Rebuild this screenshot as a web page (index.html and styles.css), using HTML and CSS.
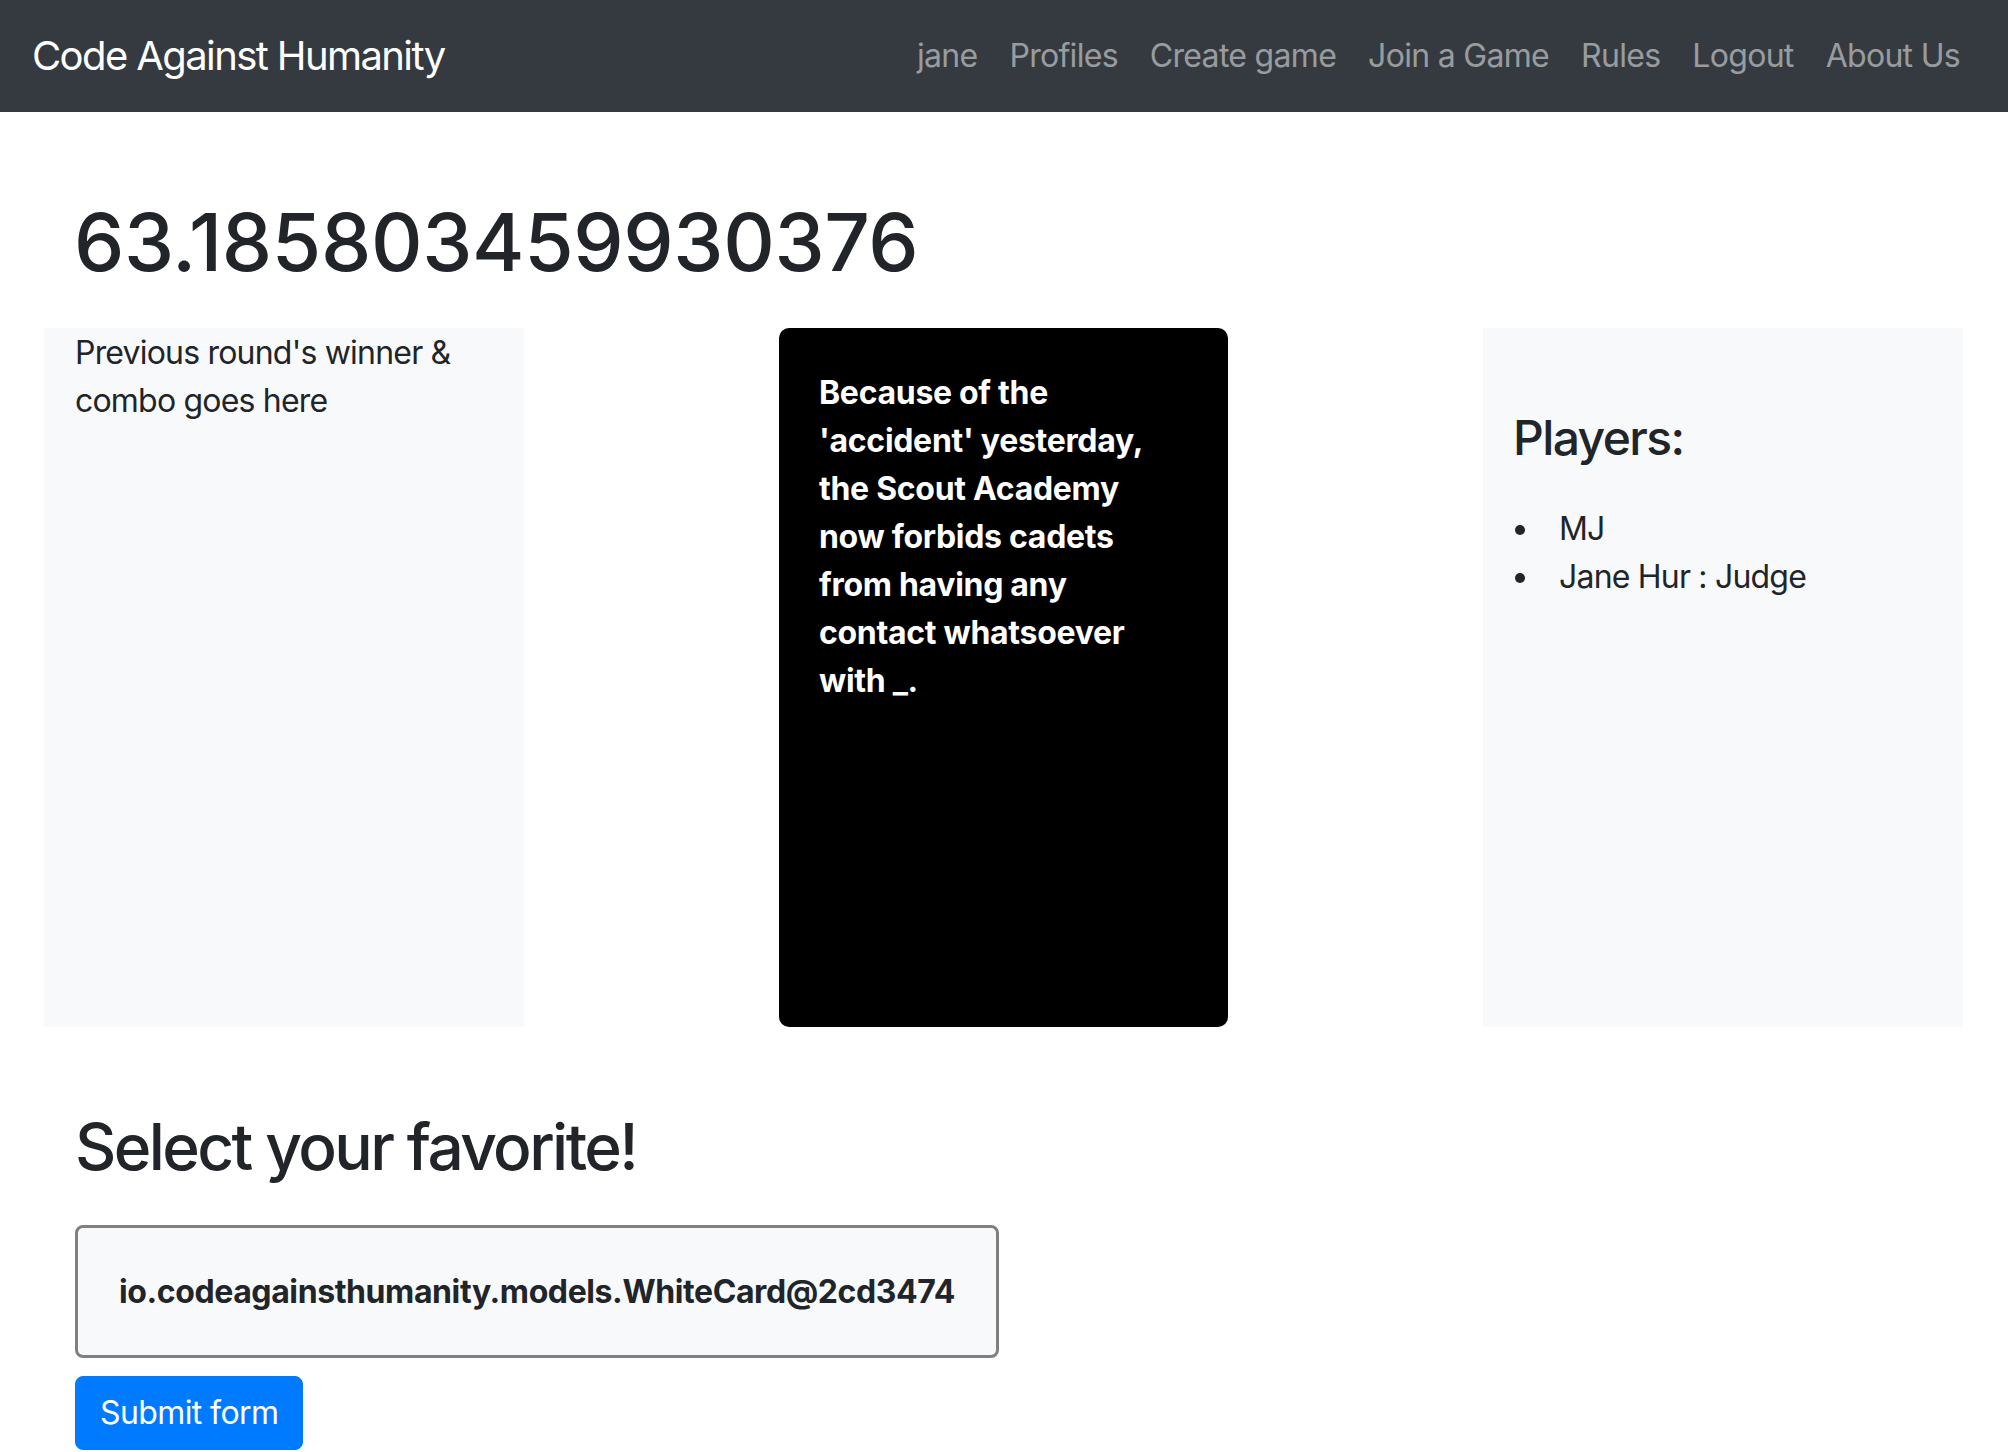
FILE: index.html
```html
<!DOCTYPE html>
<html lang="en">
<head>
<meta charset="utf-8">
<title>Code Against Humanity</title>
<link rel="stylesheet" href="styles.css">
</head>
<body>
<nav class="navbar">
  <a class="brand" href="#">Code Against Humanity</a>
  <ul class="nav-links">
    <li><a href="#">jane</a></li>
    <li><a href="#">Profiles</a></li>
    <li><a href="#">Create game</a></li>
    <li><a href="#">Join a Game</a></li>
    <li><a href="#">Rules</a></li>
    <li><a href="#">Logout</a></li>
    <li><a href="#">About Us</a></li>
  </ul>
</nav>
<main class="page">
  <h1 class="score">63.185803459930376</h1>
  <div class="board">
    <section class="panel winner">
      <p>Previous round's winner &amp; combo goes here</p>
    </section>
    <section class="black-card">
      <p>Because of the 'accident' yesterday, the Scout Academy now forbids cadets from having any contact whatsoever with _.</p>
    </section>
    <section class="panel players">
      <h4 class="players-title">Players:</h4>
      <ul class="player-list">
        <li>MJ</li>
        <li>Jane Hur : Judge</li>
      </ul>
    </section>
  </div>
  <form class="pick">
    <h2 class="pick-title">Select your favorite!</h2>
    <label class="choice">io.codeagainsthumanity.models.WhiteCard@2cd3474</label>
    <button type="button" class="btn-submit">Submit form</button>
  </form>
</main>
</body>
</html>
```

FILE: styles.css
```css
* {
  box-sizing: border-box;
}

html, body {
  margin: 0;
  padding: 0;
  background: #ffffff;
}

body {
  font-family: Inter, "Noto Sans", "Liberation Sans", sans-serif;
  font-size: 32px;
  line-height: 48px;
  color: #212529;
  letter-spacing: -0.8px;
  overflow: hidden;
}

/* Navbar */
.navbar {
  height: 112px;
  background: #343a40;
  display: flex;
  align-items: center;
  padding: 0 32px;
}

.brand {
  font-size: 40px;
  line-height: 60px;
  color: #ffffff;
  text-decoration: none;
  margin-right: auto;
  letter-spacing: -1.6px;
}

.nav-links {
  list-style: none;
  margin: 0;
  padding: 0;
  display: flex;
}

.nav-links a {
  display: block;
  padding: 0 16px;
  font-size: 32px;
  line-height: 48px;
  color: rgba(255, 255, 255, 0.5);
  text-decoration: none;
  letter-spacing: -0.7px;
}

/* Main */
.page {
  padding: 0 45px 0 44px;
}

.score {
  margin: 82px 0 38px 30px;
  font-size: 80px;
  line-height: 96px;
  font-weight: 500;
  letter-spacing: -0.35px;
}

.board {
  display: flex;
  justify-content: space-between;
  height: 699px;
}

.panel {
  width: 480px;
  background: #f8f9fa;
}

.winner {
  padding: 1px 30px 0 31px;
}

.winner p {
  margin: 0;
}

.black-card {
  width: 449px;
  background: #000000;
  color: #ffffff;
  border-radius: 10px;
  padding: 41px 44px 41px 40px;
  font-weight: 700;
}

.black-card p {
  margin: 0;
  letter-spacing: -0.3px;
}

.players {
  padding: 81px 30px 0;
}

.players-title {
  margin: 0 0 38px;
  font-size: 48px;
  line-height: 58px;
  font-weight: 500;
  letter-spacing: -1.6px;
}

.player-list {
  margin: 0;
  padding-left: 46px;
  list-style: none;
}

.player-list li::before {
  content: "";
  display: inline-block;
  width: 10px;
  height: 10px;
  border-radius: 50%;
  background: #212529;
  margin-left: -44px;
  margin-right: 34px;
  vertical-align: 5px;
}

/* Pick form */
.pick {
  padding-left: 31px;
}

.pick-title {
  margin: 81px 0 40px;
  font-size: 64px;
  line-height: 77px;
  font-weight: 500;
  letter-spacing: -2.6px;
}

.choice {
  display: flex;
  align-items: center;
  width: 924px;
  height: 133px;
  padding: 0 41px;
  border: 3px solid #808080;
  border-radius: 8px;
  background: #f8f9fa;
  font-weight: 700;
  letter-spacing: -0.4px;
}

.btn-submit {
  display: block;
  margin-top: 18px;
  height: 74px;
  padding: 0 24px;
  border: 1px solid #007bff;
  border-radius: 8px;
  background: #007bff;
  color: #ffffff;
  font-family: inherit;
  font-size: 32px;
  line-height: 48px;
  letter-spacing: -0.6px;
}
```
